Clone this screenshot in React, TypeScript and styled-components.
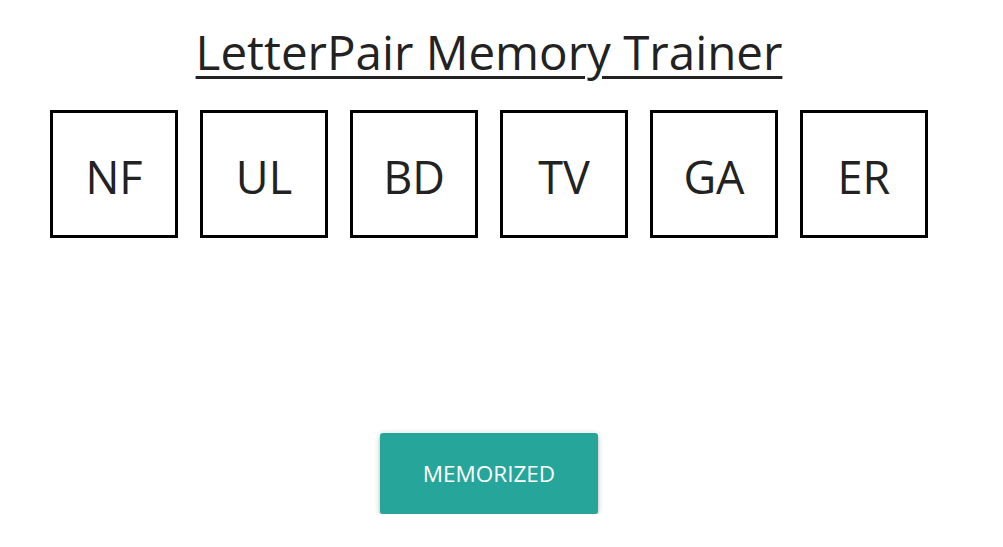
import styled, { createGlobalStyle } from "styled-components";

const GlobalStyle = createGlobalStyle`
  body {
    margin: 0;
    font-family: "Open Sans", "Noto Sans", sans-serif;
    background: #fff;
    color: rgba(0, 0, 0, 0.87);
  }
`;

const Page = styled.div`
  width: 978px;
  display: flex;
  flex-direction: column;
  align-items: center;
`;

const Title = styled.h1`
  margin: 22px 0 0;
  font-size: 47.5px;
  font-weight: 400;
  line-height: 60px;
  text-decoration: underline;
  text-decoration-thickness: 3px;
  text-underline-offset: 6px;
  color: #222;
`;

const PairRow = styled.div`
  display: flex;
  margin-top: 28px;
`;

const PairBox = styled.div`
  box-sizing: border-box;
  width: 128px;
  height: 128px;
  margin: 0 11px;
  padding-top: 4px;
  border: 3px solid #000;
  display: flex;
  align-items: center;
  justify-content: center;
  font-size: 45px;
  color: #222;
`;

const Button = styled.button`
  margin-top: 195px;
  width: 218px;
  height: 81px;
  border: none;
  border-radius: 3px;
  background: #26a69a;
  color: #fff;
  font-family: inherit;
  font-size: 22.5px;
  text-transform: uppercase;
  cursor: pointer;
  box-shadow: 0 3px 3px 0 rgba(0, 0, 0, 0.16), 0 3px 1px -2px rgba(0, 0, 0, 0.12),
    0 1px 6px 0 rgba(0, 0, 0, 0.2);
`;

const pairs = ["NF", "UL", "BD", "TV", "GA", "ER"];

export default function App() {
  return (
    <>
      <GlobalStyle />
      <Page>
        <Title>LetterPair Memory Trainer</Title>
        <PairRow>
          {pairs.map((p) => (
            <PairBox key={p}>{p}</PairBox>
          ))}
        </PairRow>
        <Button>Memorized</Button>
      </Page>
    </>
  );
}
